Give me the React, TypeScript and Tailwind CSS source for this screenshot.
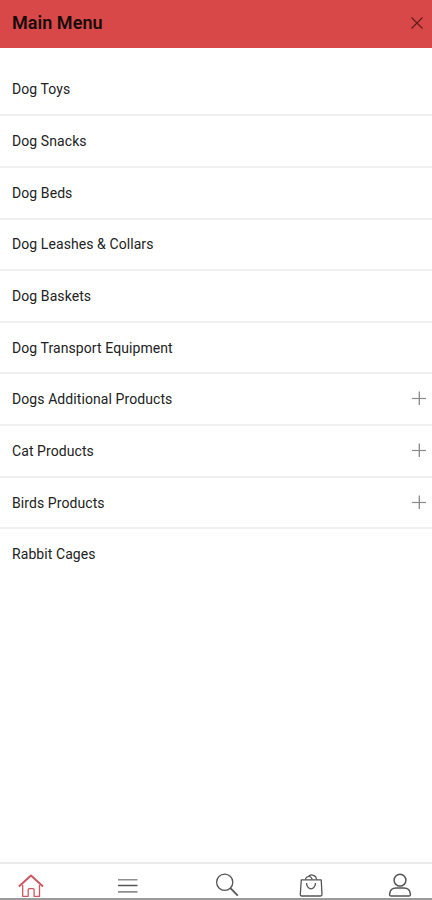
import React, { useState } from "react";

interface MenuItem {
  label: string;
  expandable?: boolean;
}

const MENU_ITEMS: MenuItem[] = [
  { label: "Dog Toys" },
  { label: "Dog Snacks" },
  { label: "Dog Beds" },
  { label: "Dog Leashes & Collars" },
  { label: "Dog Baskets" },
  { label: "Dog Transport Equipment" },
  { label: "Dogs Additional Products", expandable: true },
  { label: "Cat Products", expandable: true },
  { label: "Birds Products", expandable: true },
  { label: "Rabbit Cages" },
];

const CloseIcon = () => (
  <svg className="w-3 h-3" viewBox="0 0 12 12" fill="none" stroke="currentColor" strokeWidth="1.1">
    <path d="M0.5 0.5L11.5 11.5M11.5 0.5L0.5 11.5" />
  </svg>
);

const PlusIcon = () => (
  <svg className="w-3.5 h-3.5 text-[#8a8a8a]" viewBox="0 0 14 14" fill="none" stroke="currentColor">
    <path d="M0 7.5H14" strokeWidth="1.2" />
    <path d="M7.3 0.5V14" strokeWidth="1.3" />
  </svg>
);

const HomeIcon = () => (
  <svg className="w-[26px] h-6" viewBox="0 0 26 24" fill="none" stroke="currentColor" strokeWidth="1.3" strokeLinejoin="round">
    <path d="M4.7 12V23.3H10.2V16.7Q10.2 15.6 11.3 15.6H15Q16.1 15.6 16.1 16.7V23.3H21.5V12" />
    <path d="M0.9 13.4L13 2.6L25 13.4" strokeWidth="2" />
  </svg>
);

const ListIcon = () => (
  <svg className="w-5 h-6" viewBox="0 0 20 24" fill="none" stroke="currentColor">
    <path d="M0 6.7H19.5M0 18.9H19.5" strokeWidth="1.6" opacity="0.65" />
    <path d="M0 12.5H19.5" strokeWidth="1.5" />
  </svg>
);

const SearchIcon = () => (
  <svg className="w-6 h-6" viewBox="0 0 24 24" fill="none" stroke="currentColor">
    <circle cx="9.7" cy="9.3" r="8.1" strokeWidth="1.3" />
    <path d="M15.4 15.2L22.8 22.7" strokeWidth="1.8" />
  </svg>
);

const BagIcon = () => (
  <svg className="w-6 h-6" viewBox="0 0 24 24" fill="none" stroke="currentColor" strokeWidth="1.3" strokeLinejoin="round">
    <path d="M2.3 6.8H22.2L23 21.2Q23.1 23 21.2 23H2.9Q1.2 23 1.3 21.2Z" />
    <path d="M6.3 6.6Q7 3.2 10.2 3.5Q12.6 3.8 13.2 6.6M9.2 3.6Q11.6 0.8 14.4 2.4Q17.2 3 17.6 6.6" strokeWidth="1.1" />
    <path d="M7.6 10V11.2Q8.6 15.8 12 15.8Q15.4 15.8 16.4 11.2V10" />
  </svg>
);

const UserIcon = () => (
  <svg className="w-6 h-6" viewBox="0 0 24 24" fill="none" stroke="currentColor" strokeWidth="1.5" strokeLinejoin="round">
    <circle cx="12" cy="7.2" r="5.9" />
    <path d="M3.2 23Q1.5 23 1.6 21.2Q2.2 15.1 8 15.1H16Q21.8 15.1 22.4 21.2Q22.5 23 20.8 23Z" />
  </svg>
);

const App: React.FC = () => {
  const [activeTab, setActiveTab] = useState("home");

  const tabClass = (tab: string) =>
    activeTab === tab ? "text-[#cf5660]" : "text-[#555555]";

  return (
    <div className="h-[900px] w-[432px] flex flex-col bg-white overflow-hidden font-['Roboto',sans-serif] text-[#222222]">
      <header className="h-12 shrink-0 flex items-center justify-between bg-[#d84848] pl-3 pr-[9px] pb-0.5">
        <h1 className="text-[18px] leading-6 font-semibold tracking-[0.05px] text-[#170b0b]">
          Main Menu
        </h1>
        <button aria-label="Close" className="text-[#5c1c1c]">
          <CloseIcon />
        </button>
      </header>

      <ul className="flex-1 pt-[16.6px]">
        {MENU_ITEMS.map((item) => (
          <li
            key={item.label}
            className="h-[51.65px] flex items-center justify-between pl-3 pr-1.5 border-b-2 border-[#f0f0f0] last:border-transparent"
          >
            <span className="text-sm tracking-[0.08px]">{item.label}</span>
            {item.expandable && (
              <button aria-label={`Expand ${item.label}`} className="pb-0.5">
                <PlusIcon />
              </button>
            )}
          </li>
        ))}
      </ul>

      <nav className="h-[38px] shrink-0 flex items-end border-t-2 border-t-[#ebebeb] border-b-2 border-b-[#9b9b9b] pl-[18px] pb-px">
        <button aria-label="Home" className={tabClass("home")} onClick={() => setActiveTab("home")}>
          <HomeIcon />
        </button>
        <button aria-label="Menu" className={`ml-[74px] ${tabClass("menu")}`} onClick={() => setActiveTab("menu")}>
          <ListIcon />
        </button>
        <button aria-label="Search" className={`ml-[77px] ${tabClass("search")}`} onClick={() => setActiveTab("search")}>
          <SearchIcon />
        </button>
        <button aria-label="Cart" className={`ml-[60px] ${tabClass("cart")}`} onClick={() => setActiveTab("cart")}>
          <BagIcon />
        </button>
        <button aria-label="Account" className={`ml-[65px] ${tabClass("account")}`} onClick={() => setActiveTab("account")}>
          <UserIcon />
        </button>
      </nav>
    </div>
  );
};

export default App;
